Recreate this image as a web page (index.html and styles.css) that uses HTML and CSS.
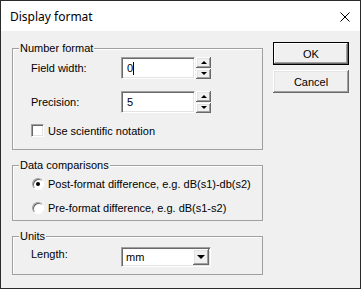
FILE: index.html
```html
<!DOCTYPE html>
<html lang="en">
<head>
    <meta charset="UTF-8">
    <title>Display format</title>
    <link rel="stylesheet" href="styles.css">
</head>
<body>
    <div class="dialog">
        <div class="titlebar">
            <span class="title">Display format</span>
            <svg class="close" width="10" height="10" viewBox="0 0 10 10">
                <path d="M0.5 0.5 L9.5 9.5 M9.5 0.5 L0.5 9.5" stroke="#000" stroke-width="1" fill="none"/>
            </svg>
        </div>

        <div class="content">
            <div class="groups">
                <fieldset class="group">
                    <legend>Number format</legend>
                    <div class="group-body body-number">
                        <div class="row row-edit">
                            <label class="field-label">Field width:</label>
                            <div class="edit">0<span class="caret"></span></div>
                            <div class="spin">
                                <div class="spin-btn"><span class="tri-up"></span></div>
                                <div class="spin-btn"><span class="tri-down"></span></div>
                            </div>
                        </div>
                        <div class="row row-edit">
                            <label class="field-label">Precision:</label>
                            <div class="edit">5</div>
                            <div class="spin">
                                <div class="spin-btn"><span class="tri-up"></span></div>
                                <div class="spin-btn"><span class="tri-down"></span></div>
                            </div>
                        </div>
                        <div class="row row-check">
                            <span class="checkbox"></span>
                            <span>Use scientific notation</span>
                        </div>
                    </div>
                </fieldset>

                <fieldset class="group">
                    <legend>Data comparisons</legend>
                    <div class="group-body body-compare">
                        <div class="row row-radio">
                            <span class="radio checked"></span>
                            <span>Post-format difference, e.g. dB(s1)-db(s2)</span>
                        </div>
                        <div class="row row-radio">
                            <span class="radio"></span>
                            <span>Pre-format difference, e.g. dB(s1-s2)</span>
                        </div>
                    </div>
                </fieldset>

                <fieldset class="group">
                    <legend>Units</legend>
                    <div class="group-body body-units">
                        <div class="row row-combo">
                            <label class="field-label">Length:</label>
                            <div class="combo">
                                <span class="combo-text">mm</span>
                                <span class="combo-btn"><span class="tri-down big"></span></span>
                            </div>
                        </div>
                    </div>
                </fieldset>
            </div>

            <div class="buttons">
                <div class="button default">OK</div>
                <div class="button">Cancel</div>
            </div>
        </div>
    </div>
</body>
</html>
```

FILE: styles.css
```css
* {
    box-sizing: border-box;
}

body {
    margin: 0;
    font-family: 'Liberation Sans', Arial, sans-serif;
    font-size: 11px;
    color: #000;
}

.dialog {
    width: 361px;
    height: 289px;
    border: 1px solid #2b2b2b;
    background: #f0f0f0;
}

/* Title bar */
.titlebar {
    height: 30px;
    background: #fff;
    display: flex;
    align-items: center;
    justify-content: space-between;
    padding: 0 10px 0 9px;
}

.title {
    font-family: 'Noto Sans', sans-serif;
    font-size: 12px;
}

.close {
    display: block;
    margin-top: 1px;
}

/* Main area */
.content {
    display: flex;
    gap: 10px;
    padding: 10px 0 0 11px;
}

.groups {
    width: 251px;
    display: flex;
    flex-direction: column;
    gap: 8px;
}

.group {
    margin: 0;
    padding: 0 6px;
    min-width: 0;
    border: 1px solid #a0a0a0;
    box-shadow: inset 1px 1px #fff;
}

.group legend {
    padding: 0 1px;
    line-height: 14px;
    background: #f0f0f0;
}

.group-body {
    display: flex;
    flex-direction: column;
    padding-left: 12px;
}

.body-number {
    padding-top: 2px;
    padding-bottom: 12px;
}

.body-compare {
    padding-top: 4px;
    padding-bottom: 4px;
    gap: 8px;
}

.body-units {
    padding-top: 4px;
    padding-bottom: 7px;
}

.row {
    display: flex;
    align-items: center;
}

.row-edit {
    height: 22px;
    margin-bottom: 12px;
}

.row-edit + .row-edit {
    margin-bottom: 11px;
}

.row-check {
    height: 13px;
    gap: 4px;
}

.row-radio {
    height: 16px;
    gap: 4px;
    padding-left: 1px;
}

.row-combo {
    height: 20px;
    align-items: flex-start;
}

.field-label {
    width: 90px;
}

.row-combo .field-label {
    margin-top: 1px;
}

/* Edit with spinner */
.edit {
    width: 74px;
    height: 22px;
    background: #fff;
    border-top: 1px solid #a0a0a0;
    border-left: 1px solid #a0a0a0;
    border-right: 1px solid #fff;
    border-bottom: 1px solid #fff;
    box-shadow: inset 1px 1px #696969, inset -1px -1px #e3e3e3;
    padding: 4px 0 0 5px;
    line-height: 13px;
}

.caret {
    display: inline-block;
    width: 1px;
    height: 13px;
    background: #000;
    vertical-align: top;
}

.spin {
    width: 15px;
    height: 22px;
    margin-left: 1px;
    display: flex;
    flex-direction: column;
    gap: 1px;
}

.spin-btn {
    flex: 1;
    background: #f0f0f0;
    box-shadow: inset -1px -1px #696969, inset 1px 1px #fff, inset -2px -2px #a0a0a0, inset 2px 2px #e3e3e3;
    display: flex;
    align-items: center;
    justify-content: center;
}

.tri-up {
    width: 0;
    height: 0;
    border-left: 3px solid transparent;
    border-right: 3px solid transparent;
    border-bottom: 3px solid #000;
}

.tri-down {
    width: 0;
    height: 0;
    border-left: 3px solid transparent;
    border-right: 3px solid transparent;
    border-top: 3px solid #000;
}

.tri-down.big {
    border-left-width: 4px;
    border-right-width: 4px;
    border-top-width: 4px;
}

/* Check box and radio buttons */
.checkbox {
    width: 13px;
    height: 13px;
    background: #fff;
    border-top: 1px solid #a0a0a0;
    border-left: 1px solid #a0a0a0;
    border-right: 1px solid #fff;
    border-bottom: 1px solid #fff;
    box-shadow: inset 1px 1px #696969, inset -1px -1px #e3e3e3;
}

.radio {
    width: 12px;
    height: 12px;
    border-radius: 50%;
    background: #fff;
    border: 1px solid;
    border-color: #a0a0a0 #fff #fff #a0a0a0;
    box-shadow: inset 1px 1px #696969;
    display: flex;
    align-items: center;
    justify-content: center;
}

.radio.checked::after {
    content: "";
    width: 4px;
    height: 4px;
    border-radius: 50%;
    background: #000;
}

/* Combo box */
.combo {
    width: 90px;
    height: 20px;
    background: #fff;
    border-top: 1px solid #a0a0a0;
    border-left: 1px solid #a0a0a0;
    border-right: 1px solid #fff;
    border-bottom: 1px solid #fff;
    box-shadow: inset 1px 1px #696969, inset -1px -1px #e3e3e3;
    display: flex;
    align-items: center;
    justify-content: space-between;
    padding: 1px 1px 1px 4px;
}

.combo-btn {
    width: 16px;
    height: 16px;
    background: #f0f0f0;
    box-shadow: inset -1px -1px #696969, inset 1px 1px #fff, inset -2px -2px #a0a0a0, inset 2px 2px #e3e3e3;
    display: flex;
    align-items: center;
    justify-content: center;
}

/* Dialog buttons */
.buttons {
    width: 76px;
    margin-top: 1px;
    display: flex;
    flex-direction: column;
    gap: 5px;
}

.button {
    height: 23px;
    display: flex;
    align-items: center;
    justify-content: center;
    background: #f0f0f0;
    box-shadow: inset -1px -1px #696969, inset 1px 1px #fff, inset -2px -2px #a0a0a0, inset 2px 2px #e3e3e3;
}

.button.default {
    border: 1px solid #000;
    box-shadow: inset -1px -1px #696969, inset 1px 1px #fff, inset -2px -2px #a0a0a0;
}
```
